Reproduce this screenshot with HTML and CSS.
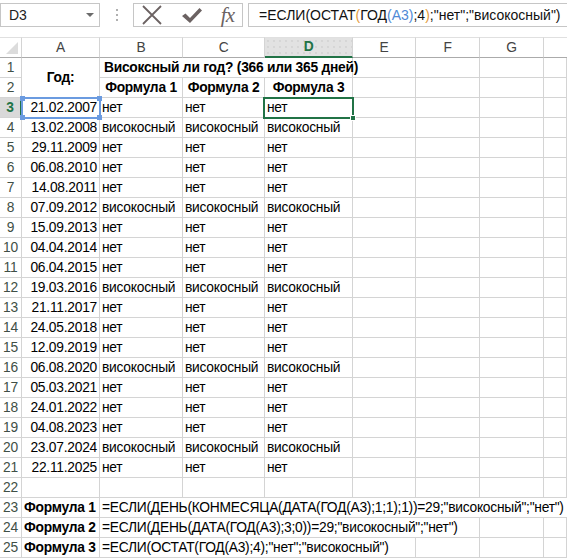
FILE: index.html
```html
<!DOCTYPE html>
<html>
<head>
<meta charset="utf-8">
<link rel="stylesheet" href="styles.css">
</head>
<body>
<div class="toolbar">
  <div class="namebox"><span>D3</span><span class="drop"></span></div>
  <div class="dots"><i></i><i></i><i></i></div>
  <div class="fxbox">
    <svg class="ic" width="22" height="20" viewBox="0 0 22 20"><path d="M2 1 L20 19 M20 1 L2 19" stroke="#6b6262" stroke-width="1.8" fill="none"/></svg>
    <svg class="ic" width="22" height="20" viewBox="0 0 22 20"><path d="M1 11 L4.5 8.5 L9 13 L18.5 3 L21 5.5 L9 18 Z" fill="#6b6262"/></svg>
    <span class="fx">fx</span>
  </div>
  <div class="formula">=ЕСЛИ(ОСТАТ<span class="o">(</span>ГОД<span class="bl">(A3)</span>;4<span class="o">)</span>;"нет";"високосный")</div>
</div>
<div class="sheet">
  <div class="grid">
    <div class="corner"><span class="tri"></span></div>
    <div class="ch">A</div><div class="ch">B</div><div class="ch">C</div><div class="ch sel">D</div><div class="ch">E</div><div class="ch">F</div><div class="ch">G</div><div class="ch last"></div>

    <div class="rh">1</div><div class="c b ctr year">Год:</div><div class="c b span3">Високсный ли год? (366 или 365 дней)</div><div class="c"></div><div class="c"></div><div class="c"></div><div class="c"></div>
    <div class="rh">2</div><div class="c b ctr">Формула 1</div><div class="c b ctr">Формула 2</div><div class="c b ctr">Формула 3</div><div class="c"></div><div class="c"></div><div class="c"></div><div class="c"></div>
    <div class="rh sel">3</div><div class="c d">21.02.2007</div><div class="c">нет</div><div class="c">нет</div><div class="c">нет</div><div class="c"></div><div class="c"></div><div class="c"></div><div class="c"></div>
    <div class="rh">4</div><div class="c d">13.02.2008</div><div class="c">високосный</div><div class="c">високосный</div><div class="c">високосный</div><div class="c"></div><div class="c"></div><div class="c"></div><div class="c"></div>
    <div class="rh">5</div><div class="c d">29.11.2009</div><div class="c">нет</div><div class="c">нет</div><div class="c">нет</div><div class="c"></div><div class="c"></div><div class="c"></div><div class="c"></div>
    <div class="rh">6</div><div class="c d">06.08.2010</div><div class="c">нет</div><div class="c">нет</div><div class="c">нет</div><div class="c"></div><div class="c"></div><div class="c"></div><div class="c"></div>
    <div class="rh">7</div><div class="c d">14.08.2011</div><div class="c">нет</div><div class="c">нет</div><div class="c">нет</div><div class="c"></div><div class="c"></div><div class="c"></div><div class="c"></div>
    <div class="rh">8</div><div class="c d">07.09.2012</div><div class="c">високосный</div><div class="c">високосный</div><div class="c">високосный</div><div class="c"></div><div class="c"></div><div class="c"></div><div class="c"></div>
    <div class="rh">9</div><div class="c d">15.09.2013</div><div class="c">нет</div><div class="c">нет</div><div class="c">нет</div><div class="c"></div><div class="c"></div><div class="c"></div><div class="c"></div>
    <div class="rh">10</div><div class="c d">04.04.2014</div><div class="c">нет</div><div class="c">нет</div><div class="c">нет</div><div class="c"></div><div class="c"></div><div class="c"></div><div class="c"></div>
    <div class="rh">11</div><div class="c d">06.04.2015</div><div class="c">нет</div><div class="c">нет</div><div class="c">нет</div><div class="c"></div><div class="c"></div><div class="c"></div><div class="c"></div>
    <div class="rh">12</div><div class="c d">19.03.2016</div><div class="c">високосный</div><div class="c">високосный</div><div class="c">високосный</div><div class="c"></div><div class="c"></div><div class="c"></div><div class="c"></div>
    <div class="rh">13</div><div class="c d">21.11.2017</div><div class="c">нет</div><div class="c">нет</div><div class="c">нет</div><div class="c"></div><div class="c"></div><div class="c"></div><div class="c"></div>
    <div class="rh">14</div><div class="c d">24.05.2018</div><div class="c">нет</div><div class="c">нет</div><div class="c">нет</div><div class="c"></div><div class="c"></div><div class="c"></div><div class="c"></div>
    <div class="rh">15</div><div class="c d">12.09.2019</div><div class="c">нет</div><div class="c">нет</div><div class="c">нет</div><div class="c"></div><div class="c"></div><div class="c"></div><div class="c"></div>
    <div class="rh">16</div><div class="c d">06.08.2020</div><div class="c">високосный</div><div class="c">високосный</div><div class="c">високосный</div><div class="c"></div><div class="c"></div><div class="c"></div><div class="c"></div>
    <div class="rh">17</div><div class="c d">05.03.2021</div><div class="c">нет</div><div class="c">нет</div><div class="c">нет</div><div class="c"></div><div class="c"></div><div class="c"></div><div class="c"></div>
    <div class="rh">18</div><div class="c d">24.01.2022</div><div class="c">нет</div><div class="c">нет</div><div class="c">нет</div><div class="c"></div><div class="c"></div><div class="c"></div><div class="c"></div>
    <div class="rh">19</div><div class="c d">04.08.2023</div><div class="c">нет</div><div class="c">нет</div><div class="c">нет</div><div class="c"></div><div class="c"></div><div class="c"></div><div class="c"></div>
    <div class="rh">20</div><div class="c d">23.07.2024</div><div class="c">високосный</div><div class="c">високосный</div><div class="c">високосный</div><div class="c"></div><div class="c"></div><div class="c"></div><div class="c"></div>
    <div class="rh">21</div><div class="c d">22.11.2025</div><div class="c">нет</div><div class="c">нет</div><div class="c">нет</div><div class="c"></div><div class="c"></div><div class="c"></div><div class="c"></div>
    <div class="rh">22</div><div class="c"></div><div class="c"></div><div class="c"></div><div class="c"></div><div class="c"></div><div class="c"></div><div class="c"></div><div class="c"></div>
    <div class="rh">23</div><div class="c b">Формула 1</div><div class="c span7">=ЕСЛИ(ДЕНЬ(КОНМЕСЯЦА(ДАТА(ГОД(A3);1;1);1))=29;"високосный";"нет")</div>
    <div class="rh">24</div><div class="c b">Формула 2</div><div class="c span5">=ЕСЛИ(ДЕНЬ(ДАТА(ГОД(A3);3;0))=29;"високосный";"нет")</div><div class="c"></div><div class="c"></div>
    <div class="rh">25</div><div class="c b">Формула 3</div><div class="c span4">=ЕСЛИ(ОСТАТ(ГОД(A3);4);"нет";"високосный")</div><div class="c"></div><div class="c"></div><div class="c"></div>
  </div>
  <div class="refbox"><i class="k tl"></i><i class="k tr"></i><i class="k bl"></i><i class="k br"></i></div>
  <div class="selbox"><i class="handle"></i></div>
</div>
</body>
</html>
```
FILE: styles.css
```css
* { box-sizing: border-box; }
html, body { margin: 0; padding: 0; background: #fff; }
body { width: 567px; height: 560px; overflow: hidden; font-family: "Liberation Sans", Arial, sans-serif; color: #000; }

.toolbar { height: 37px; position: relative; display: flex; align-items: flex-start; padding-top: 3px; }
.namebox { width: 100px; height: 24px; border: 1px solid #c6c6c6; display: flex; align-items: center; justify-content: space-between; padding: 0 5px 0 8px; font-size: 14px; color: #222; }
.drop { width: 0; height: 0; border-left: 4px solid transparent; border-right: 4px solid transparent; border-top: 4px solid #6b6b6b; }
.dots { width: 33px; height: 24px; display: flex; flex-direction: column; align-items: center; justify-content: center; gap: 3px; }
.dots i { display: block; width: 2px; height: 2px; background: #b0b0b0; }
.fxbox { width: 110px; height: 24px; border: 1px solid #c6c6c6; display: flex; align-items: center; justify-content: space-between; padding: 0 8px 0 7px; }
.ic { display: block; }
.fx { font-family: "Liberation Serif", serif; font-style: italic; font-size: 21px; color: #6b6262; line-height: 20px; letter-spacing: -1px; }
.formula { margin-left: 5px; flex: 1; height: 24px; border: 1px solid #c6c6c6; border-right: none; font-size: 14px; line-height: 22px; padding-left: 10px; white-space: nowrap; overflow: hidden; color: #111; }
.formula .o { color: #e39b3a; }
.formula .bl { color: #4f8ad6; }

.sheet { position: relative; }
.grid { display: grid; grid-template-columns: 22px 78px 83px 82px 88px 63px 64px 64px 1fr; grid-template-rows: 21px repeat(25, 20px); font-size: 13.8px; letter-spacing: -0.25px; }
.corner { border-right: 1px solid #d4d4d4; border-bottom: 1px solid #ababab; border-top: 1px solid #e0e0e0; position: relative; }
.tri { position: absolute; right: 3px; bottom: 3px; width: 0; height: 0; border-left: 12px solid transparent; border-bottom: 12px solid #dcdcdc; }
.ch { border-right: 1px solid #d4d4d4; border-bottom: 1px solid #ababab; border-top: 1px solid #e0e0e0; text-align: center; font-size: 13.8px; line-height: 19px; color: #444; }
.ch.last { border-right: none; }
.ch.sel { background-color: #e2e2e2; background-image: radial-gradient(circle, #c8c8c8 0.6px, transparent 0.8px); background-size: 6px 6px; border-bottom: 2px solid #217346; color: #217346; font-weight: bold; line-height: 18px; }
.rh { border-right: 1px solid #d4d4d4; border-bottom: 1px solid #d4d4d4; text-align: center; font-size: 13.8px; line-height: 19px; color: #3f4f46; }
.rh.sel { background: #d9d9d9; color: #217346; font-weight: bold; border-right: 2px solid #217346; }
.c { border-right: 1px solid #d4d4d4; border-bottom: 1px solid #d4d4d4; line-height: 19px; padding: 0 2px; white-space: nowrap; overflow: visible; }
.d { text-align: right; }
.b { font-weight: bold; }
.ctr { text-align: center; }
.year { grid-row: span 2; line-height: 38px; padding-top: 1px; }
.span3 { grid-column: span 3; padding-left: 4px; }
.span4 { grid-column: span 4; }
.span5 { grid-column: span 5; }
.span7 { grid-column: span 7; border-right: none; overflow: hidden; }

.refbox { position: absolute; left: 21px; top: 60px; width: 80px; height: 22px; border: 2px solid #6b9be0; }
.k { position: absolute; width: 5px; height: 5px; background: #6b9be0; }
.tl { left: -3px; top: -3px; } .tr { right: -3px; top: -3px; } .bl { left: -3px; bottom: -3px; } .br { right: -3px; bottom: -3px; }
.selbox { position: absolute; left: 263px; top: 60px; width: 91px; height: 22px; border: 2px solid #217346; }
.handle { position: absolute; right: -4px; bottom: -4px; width: 6px; height: 6px; background: #217346; border: 1px solid #fff; }
```
